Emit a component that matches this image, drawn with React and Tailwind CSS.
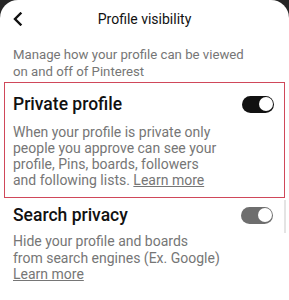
export default function App() {
  return (
    <div className="w-[289px] h-[300px] bg-[#262626] overflow-hidden" style={{ fontFamily: 'Roboto, "Noto Sans", sans-serif' }}>
      <div className="relative h-full bg-white rounded-t-[18px]">
        {/* Header */}
        <div className="relative flex items-center justify-center h-[38px]">
          <svg className="absolute left-[12px] top-[12px] w-[12px] h-[14px]" viewBox="0 0 12 14" fill="none">
            <path d="M8.5 1.5 L3 7 L8.5 12.5" stroke="#111" strokeWidth="2.4" strokeLinecap="square" />
          </svg>
          <span className="text-[14px] text-[#111] leading-none">Profile visibility</span>
        </div>

        {/* Intro */}
        <p className="px-[13px] mt-[8px] text-[13.2px] leading-[17px] text-[#767676] whitespace-nowrap">
          Manage how your profile can be viewed
          <br />
          on and off of Pinterest
        </p>

        {/* Private profile (highlighted) */}
        <div className="mx-[4px] mt-[2px] border-[1.5px] border-[#d0485a] px-[8px] pt-[10px] pb-[9px]">
          <div className="flex items-center justify-between">
            <span className="text-[17.5px] font-medium text-[#111] leading-[22px]">Private profile</span>
            <div className="flex items-center w-[32px] h-[17px] rounded-full bg-[#111] justify-end pr-[1.5px] mr-[2px]">
              <div className="w-[14px] h-[14px] rounded-full bg-white" />
            </div>
          </div>
          <p className="mt-[9px] text-[14px] leading-[16px] text-[#767676] whitespace-nowrap">
            When your profile is private only
            <br />
            people you approve can see your
            <br />
            profile, Pins, boards, followers
            <br />
            and following lists. <span className="underline">Learn more</span>
          </p>
        </div>

        {/* Search privacy */}
        <div className="px-[13px] pt-[6px]">
          <div className="flex items-center justify-between">
            <span className="text-[17.5px] font-medium text-[#111] leading-[22px]">Search privacy</span>
            <div className="flex items-center w-[32px] h-[17px] rounded-full bg-[#6e6e6e] justify-end pr-[1.5px] mr-[3px]">
              <div className="w-[14px] h-[14px] rounded-full bg-white" />
            </div>
          </div>
          <p className="mt-[7px] text-[14px] leading-[16.5px] text-[#767676] whitespace-nowrap">
            Hide your profile and boards
            <br />
            from search engines (Ex. Google)
            <br />
            <span className="underline">Learn more</span>
          </p>
        </div>

        {/* scrollbar */}
        <div className="absolute right-[3px] top-[200px] w-[2px] h-[33px] bg-[#e4e4e4]" />
      </div>
    </div>
  )
}
